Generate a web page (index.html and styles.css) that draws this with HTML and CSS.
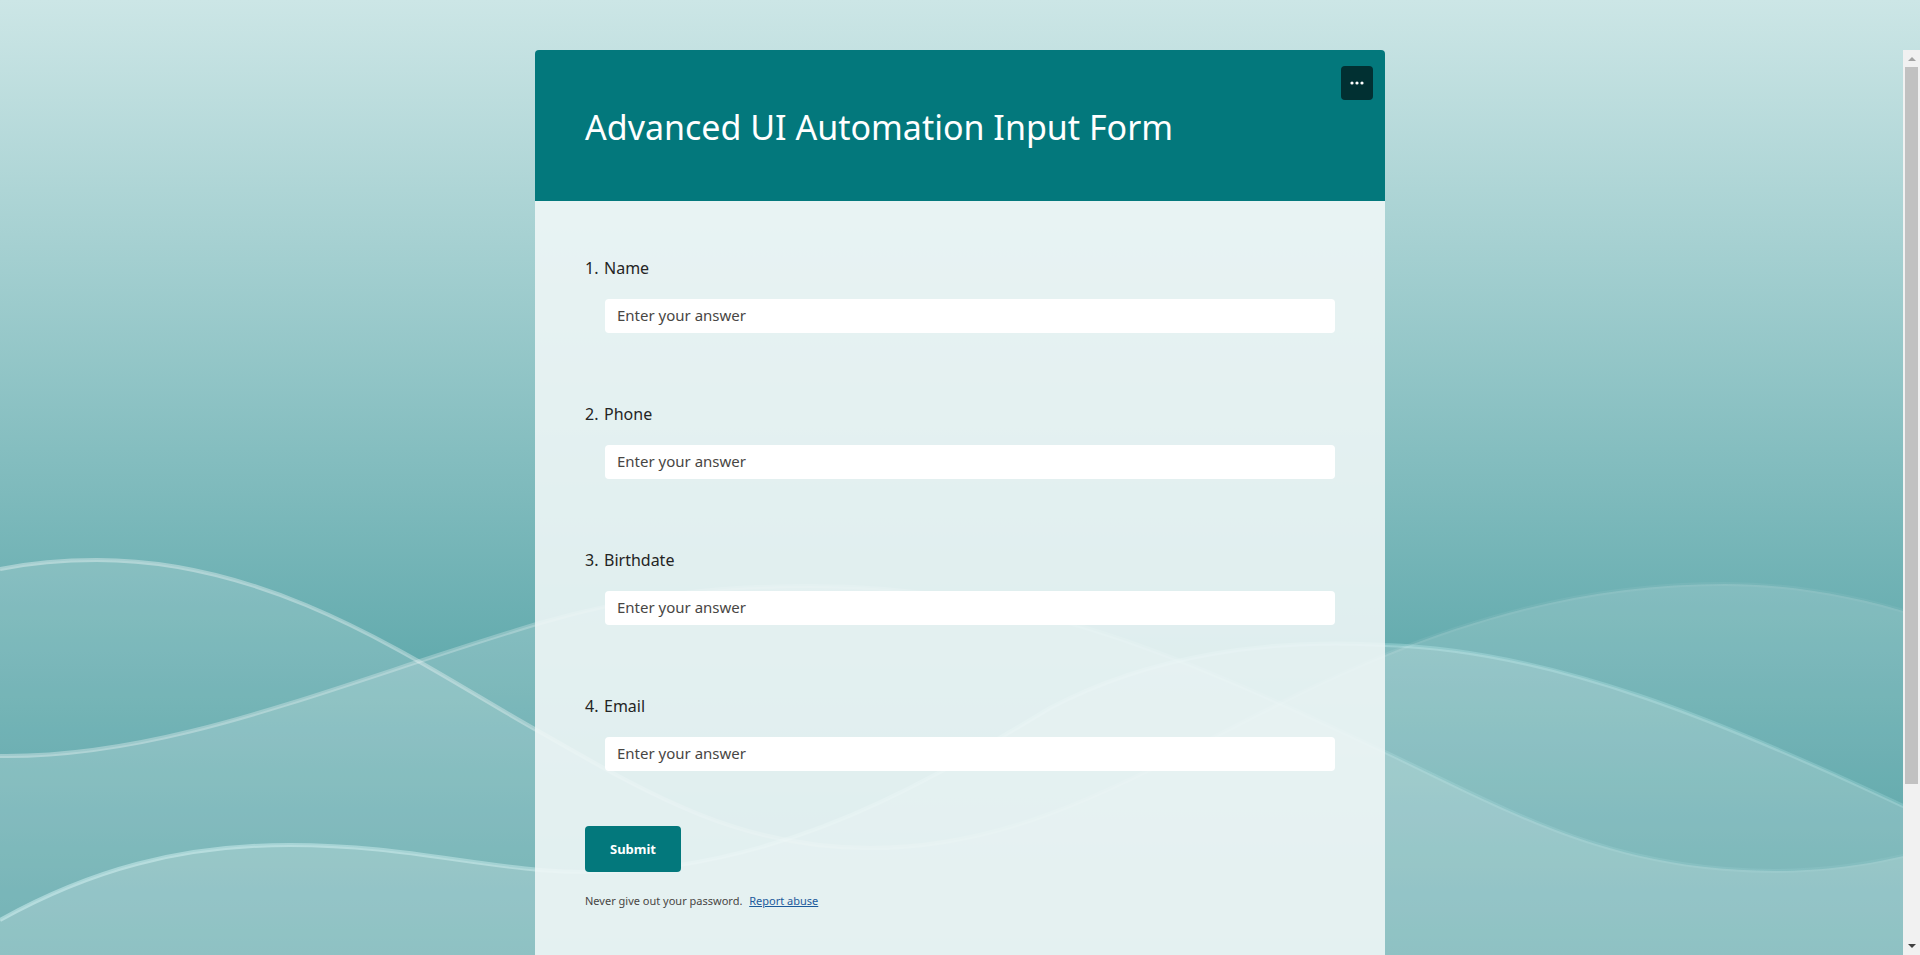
FILE: index.html
```html
<!DOCTYPE html>
<html lang="en">
<head>
<meta charset="utf-8">
<meta name="viewport" content="width=device-width, initial-scale=1">
<title>Advanced UI Automation Input Form</title>
<link rel="stylesheet" href="styles.css">
</head>
<body>
<svg class="backdrop" viewBox="0 0 1920 955" preserveAspectRatio="none" aria-hidden="true">
  <defs>
    <linearGradient id="edge" gradientUnits="userSpaceOnUse" x1="0" y1="0" x2="1920" y2="0">
      <stop offset="0" stop-color="#fff" stop-opacity=".36"/>
      <stop offset=".3" stop-color="#fff" stop-opacity=".32"/>
      <stop offset=".75" stop-color="#fff" stop-opacity=".06"/>
      <stop offset="1" stop-color="#fff" stop-opacity=".05"/>
    </linearGradient>
    <linearGradient id="edge-mid" gradientUnits="userSpaceOnUse" x1="0" y1="0" x2="1920" y2="0">
      <stop offset="0" stop-color="#fff" stop-opacity=".34"/>
      <stop offset=".28" stop-color="#fff" stop-opacity=".24"/>
      <stop offset=".75" stop-color="#d2ffff" stop-opacity=".15"/>
      <stop offset="1" stop-color="#d2ffff" stop-opacity=".06"/>
    </linearGradient>
    <linearGradient id="edge-low" gradientUnits="userSpaceOnUse" x1="0" y1="0" x2="1920" y2="0">
      <stop offset="0" stop-color="#e6ffff" stop-opacity=".42"/>
      <stop offset=".28" stop-color="#e6ffff" stop-opacity=".36"/>
      <stop offset=".72" stop-color="#d2ffff" stop-opacity=".26"/>
      <stop offset="1" stop-color="#d2ffff" stop-opacity=".18"/>
    </linearGradient>
  </defs>
  <g fill="#fff">
    <path fill-opacity=".15" d="M0 569C30 563 62 560 97 560C280 560 425 668 540 732C650 795 740 848 870 848C1060 848 1190 735 1385 655C1500 608 1610 584 1725 584C1785 584 1850 594 1920 616V955H0Z"/>
    <path fill-opacity=".19" d="M0 756C170 758 330 686 540 623C640 594 720 586 810 586C1030 586 1190 660 1385 752C1510 811 1610 871 1775 871C1820 871 1865 866 1920 852V955H0Z"/>
    <path fill-opacity=".2" d="M0 920C90 870 180 845 290 845C390 845 460 863 540 870C760 888 930 780 1050 708C1150 655 1270 638 1385 645C1550 650 1720 719 1920 814V955H0Z"/>
  </g>
  <g fill="none" stroke-width="4">
    <path stroke="url(#edge)" d="M0 569C30 563 62 560 97 560C280 560 425 668 540 732C650 795 740 848 870 848C1060 848 1190 735 1385 655C1500 608 1610 584 1725 584C1785 584 1850 594 1920 616"/>
    <path stroke="url(#edge-mid)" d="M0 756C170 758 330 686 540 623C640 594 720 586 810 586C1030 586 1190 660 1385 752C1510 811 1610 871 1775 871C1820 871 1865 866 1920 852"/>
    <path stroke="url(#edge-low)" d="M0 920C90 870 180 845 290 845C390 845 460 863 540 870C760 888 930 780 1050 708C1150 655 1270 638 1385 645C1550 650 1720 719 1920 814"/>
  </g>
</svg>

<main class="form-card">
  <header class="form-header">
    <h1 class="form-title">Advanced UI Automation Input Form</h1>
    <button class="more" type="button" aria-label="More options">
      <svg class="more-icon" viewBox="0 0 14 4" aria-hidden="true"><circle cx="2" cy="2" r="1.6"/><circle cx="7" cy="2" r="1.6"/><circle cx="12" cy="2" r="1.6"/></svg>
    </button>
  </header>
  <form class="form-body">
    <div class="question">
      <label class="question-label" for="q1"><span class="number">1.</span>Name</label>
      <input class="answer" id="q1" type="text" placeholder="Enter your answer">
    </div>
    <div class="question">
      <label class="question-label" for="q2"><span class="number">2.</span>Phone</label>
      <input class="answer" id="q2" type="text" placeholder="Enter your answer">
    </div>
    <div class="question">
      <label class="question-label" for="q3"><span class="number">3.</span>Birthdate</label>
      <input class="answer" id="q3" type="text" placeholder="Enter your answer">
    </div>
    <div class="question">
      <label class="question-label" for="q4"><span class="number">4.</span>Email</label>
      <input class="answer" id="q4" type="text" placeholder="Enter your answer">
    </div>
    <button class="submit" type="submit">Submit</button>
    <p class="notice">Never give out your password. <a class="report" href="#report">Report abuse</a></p>
  </form>
</main>

<div class="scrollbar" aria-hidden="true">
  <svg class="arrow arrow-off" viewBox="0 0 17 17"><path d="M5 11l4-4 4 4z"/></svg>
  <div class="track"><div class="thumb"></div></div>
  <svg class="arrow" viewBox="0 0 17 17"><path d="M5 6h8l-4 4z"/></svg>
</div>
</body>
</html>
```
FILE: styles.css
```css
* {
  box-sizing: border-box;
}

body {
  margin: 0;
  height: 100vh;
  padding-top: 50px;
  display: flex;
  justify-content: center;
  overflow: hidden;
  position: relative;
  background: linear-gradient(#cce6e6, #359195);
  color: #242424;
  font-family: "Noto Sans", sans-serif;
}

.backdrop {
  position: absolute;
  inset: 0;
  width: 100%;
  height: 100%;
}

.form-card {
  position: relative;
  display: flex;
  flex-direction: column;
  width: 100%;
  max-width: 850px;
}

.form-header {
  display: flex;
  align-items: flex-start;
  justify-content: space-between;
  padding: 16px 12px 48px 50px;
  background: #03787c;
  border-radius: 4px 4px 0 0;
}

.form-title {
  margin: 0;
  padding-top: 35px;
  color: #fff;
  font-size: 34px;
  font-weight: 400;
  line-height: 52px;
}

.more {
  display: flex;
  align-items: center;
  justify-content: center;
  width: 32px;
  height: 34px;
  padding: 0;
  border: 0;
  border-radius: 4px;
  background: #013032;
}

.more-icon {
  width: 14px;
  height: 4px;
  fill: #fff;
}

.form-body {
  flex: 1;
  padding: 55px 50px 40px;
  background: rgba(240, 247, 247, .88);
}

.question {
  display: flex;
  flex-direction: column;
  gap: 19px;
  margin-bottom: 69px;
}

.question:nth-of-type(4) {
  margin-bottom: 55px;
}

.question-label {
  display: flex;
  font-size: 16px;
  line-height: 24px;
}

.number {
  width: 19px;
}

.answer {
  height: 34px;
  margin-left: 20px;
  padding: 0 12px 2px;
  border: 0;
  border-radius: 4px;
  background: #fff;
  color: #242424;
  font-family: inherit;
  font-size: 15px;
}

.answer::placeholder {
  color: #484644;
  opacity: 1;
}

.submit {
  display: block;
  min-width: 96px;
  height: 46px;
  padding: 0 16px;
  border: 0;
  border-radius: 4px;
  background: #03787c;
  color: #fff;
  font-family: inherit;
  font-size: 13px;
  font-weight: 700;
}

.notice {
  margin: 20px 0 0;
  color: #484644;
  font-size: 11px;
  line-height: 18px;
}

.report {
  margin-left: 4px;
  color: #1c5a9c;
}

.scrollbar {
  position: absolute;
  top: 50px;
  right: 0;
  bottom: 0;
  display: flex;
  flex-direction: column;
  width: 17px;
  background: #f1f1f1;
}

.arrow {
  display: block;
  width: 17px;
  height: 17px;
  fill: #404040;
}

.arrow-off {
  fill: #a3a3a3;
}

.track {
  flex: 1;
  padding: 0 2px;
}

.thumb {
  height: 82.3%;
  background: #c1c1c1;
}
```
